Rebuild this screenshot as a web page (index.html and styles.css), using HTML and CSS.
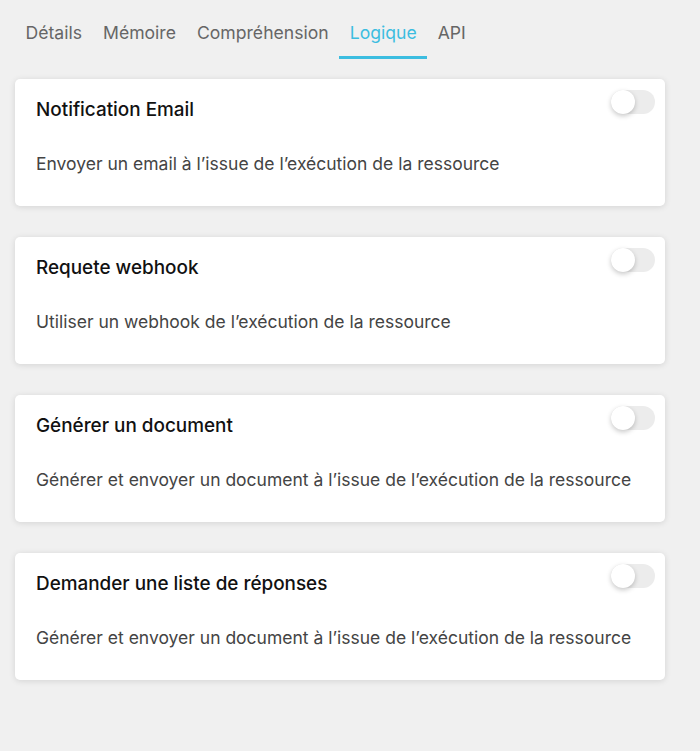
FILE: index.html
```html
<!DOCTYPE html>
<html lang="fr">
<head>
  <meta charset="UTF-8">
  <title>Logique</title>
  <link rel="stylesheet" href="styles.css">
</head>
<body>
  <div class="page">
    <nav class="tabs">
      <span class="tab">Détails</span>
      <span class="tab">Mémoire</span>
      <span class="tab">Compréhension</span>
      <span class="tab active">Logique</span>
      <span class="tab">API</span>
    </nav>

    <div class="cards">
      <div class="card">
        <div class="card-head">
          <h3>Notification Email</h3>
          <span class="switch"><span class="knob"></span></span>
        </div>
        <p>Envoyer un email à l’issue de l’exécution de la ressource</p>
      </div>

      <div class="card">
        <div class="card-head">
          <h3>Requete webhook</h3>
          <span class="switch"><span class="knob"></span></span>
        </div>
        <p>Utiliser un webhook de l’exécution de la ressource</p>
      </div>

      <div class="card">
        <div class="card-head">
          <h3>Générer un document</h3>
          <span class="switch"><span class="knob"></span></span>
        </div>
        <p>Générer et envoyer un document à l’issue de l’exécution de la ressource</p>
      </div>

      <div class="card">
        <div class="card-head">
          <h3>Demander une liste de réponses</h3>
          <span class="switch"><span class="knob"></span></span>
        </div>
        <p>Générer et envoyer un document à l’issue de l’exécution de la ressource</p>
      </div>
    </div>
  </div>
</body>
</html>
```

FILE: styles.css
```css
body {
  margin: 0;
  font-family: 'Inter', 'Noto Sans', sans-serif;
  background-color: #f0f0f0;
  height: 100vh;
}

.page {
  padding: 18px 35px 0 15px;
}

.tabs {
  display: flex;
  height: 40px;
}

.tab {
  padding: 4px 10.5px 0;
  font-size: 17.6px;
  color: #666;
  line-height: 22px;
  border-bottom: 3px solid transparent;
  box-sizing: border-box;
  height: 41px;
}

.tab.active {
  color: #3cbde0;
  border-bottom-color: #3cbde0;
}

.cards {
  display: flex;
  flex-direction: column;
  gap: 31px;
  margin-top: 21px;
}

.card {
  background: #fff;
  border-radius: 5px;
  box-shadow: 0 1px 6px rgba(0, 0, 0, 0.12);
  padding: 19px 10px 0 21px;
  height: 127px;
  box-sizing: border-box;
}

.card-head {
  display: flex;
  justify-content: space-between;
  align-items: flex-start;
}

.card h3 {
  margin: 0;
  padding-top: 1px;
  font-size: 18.9px;
  font-weight: 500;
  color: #111;
  line-height: 22px;
}

.card p {
  margin: 32px 0 0;
  font-size: 17.5px;
  color: #444;
  line-height: 22px;
}

.switch {
  position: relative;
  width: 44px;
  height: 24px;
  border-radius: 12px;
  background: #ececec;
  margin-top: -8px;
}

.knob {
  position: absolute;
  left: 0;
  top: 0;
  width: 24px;
  height: 24px;
  border-radius: 50%;
  background: #fff;
  box-shadow: 0 2px 5px rgba(0, 0, 0, 0.22);
}
```
